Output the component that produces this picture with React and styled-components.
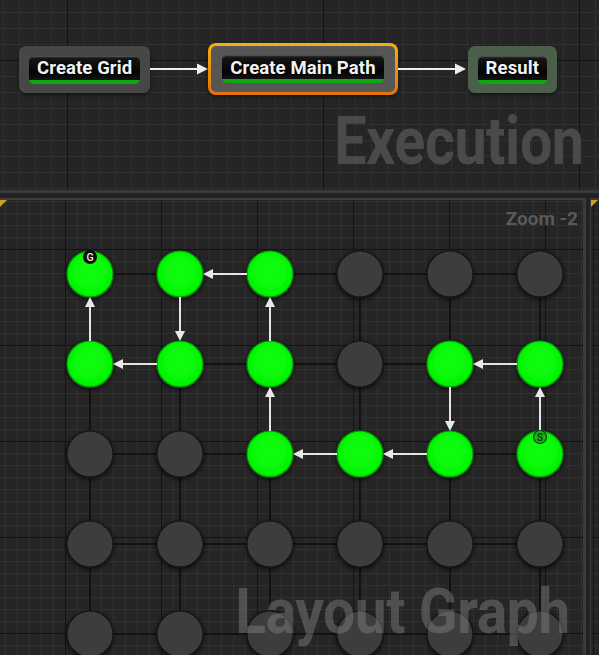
import React from "react";
import styled, { createGlobalStyle } from "styled-components";

const Global = createGlobalStyle`
  html, body { margin: 0; padding: 0; background: #1d1d1d; overflow: hidden; }
  * { box-sizing: border-box; }
`;

const FONT = `Roboto, "Noto Sans", "Liberation Sans", sans-serif`;

const Page = styled.div`
  width: 599px;
  height: 655px;
  display: flex;
  flex-direction: column;
  overflow: hidden;
  background: #1f1f1f;
  font-family: ${FONT};
`;

const gridBg = (major, minor, mx, my, nx, ny) => `
  background-color: #252525;
  background-image:
    linear-gradient(to right, #131313 1px, transparent 1px),
    linear-gradient(to bottom, #131313 1px, transparent 1px),
    linear-gradient(to right, #303030 1px, transparent 1px),
    linear-gradient(to bottom, #303030 1px, transparent 1px);
  background-size: ${major}px ${major}px, ${major}px ${major}px, ${minor}px ${minor}px, ${minor}px ${minor}px;
  background-position: ${mx}px 0, 0 ${my}px, ${nx}px 0, 0 ${ny}px;
`;

const TopPanel = styled.section`
  height: 193px;
  flex: none;
  border-bottom: 3px solid #3a3a3a;
  display: grid;
  grid-template-rows: auto 1fr;
  ${gridBg(256, 16, 67, 60, 3, 12)}
`;

const NodeRow = styled.div`
  display: flex;
  align-items: center;
  padding: 43px 0 0 19px;
`;

const Node = styled.div`
  display: flex;
  border-radius: 7px;
  padding: ${(p) => (p.$selected ? "9px 11px 9px 11px" : "10px 10px 9px 10px")};
  background: ${(p) => p.$bg};
  box-shadow: 0 2px 4px rgba(0, 0, 0, 0.45);
  ${(p) =>
    p.$selected &&
    `
    border: 3px solid transparent;
    border-radius: 8px;
    background: linear-gradient(${p.$bg}, ${p.$bg}) padding-box,
      linear-gradient(to bottom, #f6b00e, #e3720a) border-box;
  `}
`;

const NodeTitle = styled.div`
  height: 28px;
  padding: 0 8px 3px 8px;
  display: flex;
  align-items: center;
  border-radius: 5px;
  color: #f2f2f2;
  font-weight: 700;
  font-size: 18.5px;
  letter-spacing: 0.1px;
  white-space: nowrap;
  text-shadow: 1px 1px 1px #000, 0 0 2px #000;
  background:
    linear-gradient(to bottom, #10a810, #10a810) bottom / 100% 4px no-repeat,
    linear-gradient(to bottom, #3c3c3c 0, #141414 3px, #050505 60%, #1a1a1a 100%);
  box-shadow: inset 0 1px 0 rgba(255, 255, 255, 0.12);
`;

const ArrowSvg = styled.svg`
  display: block;
  flex: none;
`;

const Watermark = styled.div`
  font-family: ${FONT};
  font-weight: 700;
  font-size: ${(p) => p.$size}px;
  line-height: 1;
  color: ${(p) => p.$color};
  transform: scaleX(${(p) => p.$sx});
  transform-origin: right center;
  white-space: nowrap;
  letter-spacing: -0.5px;
`;

const ExecTitle = styled(Watermark)`
  justify-self: end;
  align-self: end;
  margin: 0 15px 15px 0;
`;

const LowerRow = styled.div`
  flex: 1;
  display: flex;
  padding-top: 5px;
  background: #222;
  min-height: 0;
`;

const GraphPanel = styled.section`
  position: relative;
  width: 586px;
  flex: none;
  border-top: 2px solid #3b3b3b;
  border-right: 3px solid #3b3b3b;
  display: grid;
  grid-template-areas: "stack";
  overflow: hidden;
  ${gridBg(96, 12, 65, 49, 5, 1)}
  & > * {
    grid-area: stack;
  }
`;

const SidePanel = styled.section`
  position: relative;
  flex: 1;
  margin-left: 4px;
  border-top: 2px solid #3b3b3b;
  border-left: 1px solid #3b3b3b;
  ${gridBg(96, 12, 2, 49, 2, 1)}
`;

const Corner = styled.span`
  position: absolute;
  top: 0;
  left: 0;
  width: 0;
  height: 0;
  border-top: 7px solid #caa126;
  border-right: 7px solid transparent;
  z-index: 2;
`;

const GraphSvg = styled.svg`
  display: block;
  align-self: start;
  justify-self: start;
`;

const ZoomLabel = styled.div`
  justify-self: end;
  align-self: start;
  margin: 9px 5px 0 0;
  font-weight: 700;
  font-size: 19px;
  line-height: 1;
  color: #5a5a5a;
  z-index: 1;
`;

const GraphTitle = styled(Watermark)`
  justify-self: end;
  align-self: end;
  margin: 0 13px 12px 0;
  z-index: 1;
`;

function Arrow({ width, gap = 0 }) {
  const tip = width - gap;
  return (
    <ArrowSvg width={width} height={14} viewBox={`0 0 ${width} 14`}>
      <line x1={0} y1={7} x2={tip - 8} y2={7} stroke="#eeeeee" strokeWidth={2} />
      <path d={`M ${tip - 11} 1.5 L ${tip} 7 L ${tip - 11} 12.5 Z`} fill="#eeeeee" />
    </ArrowSvg>
  );
}

const COLS = 6;
const ROWS = 5;
const X0 = 90;
const Y0 = 74;
const STEP = 90;
const R = 23;

const cx = (i) => X0 + STEP * i;
const cy = (j) => Y0 + STEP * j;

const green = new Set([
  "0,0", "1,0", "2,0",
  "0,1", "1,1", "2,1", "4,1", "5,1",
  "2,2", "3,2", "4,2", "5,2",
]);

const path = [
  [5, 2], [5, 1], [4, 1], [4, 2], [3, 2], [2, 2], [2, 1], [2, 0], [1, 0], [1, 1], [0, 1], [0, 0],
];

function Graph() {
  const conns = [];
  for (let j = 0; j < ROWS; j++) {
    conns.push(
      <line key={`h${j}`} x1={cx(0)} y1={cy(j)} x2={cx(COLS - 1)} y2={cy(j)} stroke="#121212" strokeWidth={2} />
    );
  }
  for (let i = 0; i < COLS; i++) {
    conns.push(
      <line key={`v${i}`} x1={cx(i)} y1={cy(0)} x2={cx(i)} y2={470} stroke="#121212" strokeWidth={2} />
    );
  }
  const circles = [];
  for (let j = 0; j < ROWS; j++) {
    for (let i = 0; i < COLS; i++) {
      const g = green.has(`${i},${j}`);
      circles.push(
        <circle
          key={`c${i}-${j}`}
          cx={cx(i)}
          cy={cy(j)}
          r={R}
          fill={g ? "url(#greenFill)" : "#3c3c3c"}
          stroke={g ? "#0a8c0a" : "#161616"}
          strokeWidth={1.2}
          filter="url(#shadow)"
        />
      );
    }
  }
  const arrows = [];
  for (let k = 0; k < path.length - 1; k++) {
    const [a, b] = path[k];
    const [c, d] = path[k + 1];
    const dx = Math.sign(c - a);
    const dy = Math.sign(d - b);
    const sx = cx(a) + dx * R;
    const sy = cy(b) + dy * R;
    const tx = cx(c) - dx * R;
    const ty = cy(d) - dy * R;
    const hl = 10;
    const hw = 5;
    const bx = tx - dx * hl;
    const by = ty - dy * hl;
    const px = -dy;
    const py = dx;
    arrows.push(
      <g key={`a${k}`}>
        <line x1={sx} y1={sy} x2={tx - dx * 6} y2={ty - dy * 6} stroke="#e4e4e4" strokeWidth={2} />
        <path
          d={`M ${tx} ${ty} L ${bx + px * hw} ${by + py * hw} L ${bx - px * hw} ${by - py * hw} Z`}
          fill="#e8e8e8"
        />
      </g>
    );
  }
  return (
    <GraphSvg width={583} height={455} viewBox="0 0 583 455">
      <defs>
        <filter id="shadow" x="-40%" y="-40%" width="180%" height="180%">
          <feDropShadow dx="0" dy="1.5" stdDeviation="2.5" floodColor="#000" floodOpacity="0.75" />
        </filter>
        <radialGradient id="greenFill" cx="0.5" cy="0.45" r="0.6">
          <stop offset="0" stopColor="#0cff0c" />
          <stop offset="0.8" stopColor="#05f505" />
          <stop offset="1" stopColor="#04dc04" />
        </radialGradient>
      </defs>
      {conns}
      {circles}
      {arrows}
      <g>
        <circle cx={cx(0)} cy={cy(0) - 17} r={7} fill="#0d0d0d" />
        <text
          x={cx(0)}
          y={cy(0) - 13.3}
          textAnchor="middle"
          fontFamily="Roboto, 'DejaVu Sans', sans-serif"
          fontSize={10.5}
          fontWeight={500}
          fill="#f0f0f0"
        >
          G
        </text>
      </g>
      <g>
        <circle cx={cx(5)} cy={cy(2) - 17} r={6.5} fill="#19b019" stroke="#0b3f0b" strokeWidth={1.2} />
        <text
          x={cx(5)}
          y={cy(2) - 13.5}
          textAnchor="middle"
          fontFamily="Roboto, 'DejaVu Sans', sans-serif"
          fontSize={10}
          fontWeight={500}
          fill="#0a300a"
        >
          S
        </text>
      </g>
    </GraphSvg>
  );
}

export default function App() {
  return (
    <>
      <Global />
      <Page>
        <TopPanel>
          <NodeRow>
            <Node $bg="#474747">
              <NodeTitle>Create Grid</NodeTitle>
            </Node>
            <Arrow width={58} />
            <Node $bg="#565656" $selected>
              <NodeTitle>Create Main Path</NodeTitle>
            </Node>
            <Arrow width={70} gap={2} />
            <Node $bg="#4c5f4b">
              <NodeTitle>Result</NodeTitle>
            </Node>
          </NodeRow>
          <ExecTitle $size={66} $sx={0.87} $color="#4a4a4a">
            Execution
          </ExecTitle>
        </TopPanel>
        <LowerRow>
          <GraphPanel>
            <Corner />
            <Graph />
            <ZoomLabel>Zoom -2</ZoomLabel>
            <GraphTitle $size={63} $sx={0.905} $color="rgba(130,130,130,0.45)">
              Layout Graph
            </GraphTitle>
          </GraphPanel>
          <SidePanel>
            <Corner />
          </SidePanel>
        </LowerRow>
      </Page>
    </>
  );
}
